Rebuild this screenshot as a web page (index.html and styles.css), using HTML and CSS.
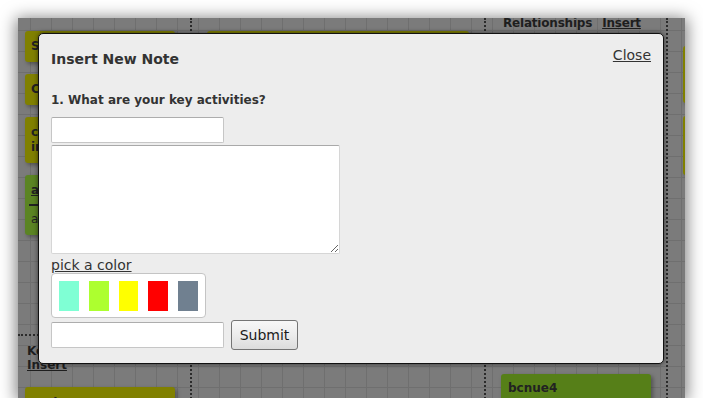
FILE: index.html
```html
<!DOCTYPE html>
<html lang="en">
<head>
  <meta charset="UTF-8">
  <meta name="viewport" content="width=device-width, initial-scale=1.0">
  <title>Canvas board</title>
  <link rel="stylesheet" href="styles.css">
</head>

<body>
  <div class="frame">
    <div class="board">
      <section class="col col-a">
        <div class="area area-top">
          <div class="note">Suppliers</div>
          <div class="note">Chiefs</div>
          <div class="note">coffee<br>importers</div>
          <div class="note note-green">
            <span class="note-title">advisors</span>
            <hr>
            <span class="note-body">accountant</span>
          </div>
        </div>
        <div class="area area-bottom">
          <h4>Key Resources</h4>
          <a href="#!" class="insert">Insert</a>
          <div class="note note-low">cash</div>
        </div>
      </section>

      <section class="col col-b">
        <div class="note note-wide">Great coffee at a fair price</div>
      </section>

      <section class="col col-c">
        <h4 class="col-head">Relationships <a href="#!" class="insert">Insert</a></h4>
        <div class="note note-green note-late">bcnue4</div>
      </section>

      <section class="col col-d">
        <div class="note note-tall">students</div>
        <div class="note note-taller">workers</div>
      </section>
    </div>

    <div class="modal">
      <div class="modal-head">
        <h3>Insert New Note</h3>
        <a href="#!" class="close">Close</a>
      </div>
      <form class="note-form" onsubmit="event.preventDefault()">
        <label for="title">1. What are your key activities?</label>
        <input type="text" id="title" name="title" class="field">
        <textarea name="body" class="body-field"></textarea>
        <a href="#!" class="pick">pick a color</a>
        <div class="swatches">
          <span class="swatch" style="background: #7fffd4"></span>
          <span class="swatch" style="background: #adff2f"></span>
          <span class="swatch" style="background: #ffff00"></span>
          <span class="swatch" style="background: #ff0000"></span>
          <span class="swatch" style="background: #708090"></span>
        </div>
        <div class="actions">
          <input type="text" name="color" class="field">
          <button type="submit">Submit</button>
        </div>
      </form>
    </div>
  </div>
</body>
</html>
```

FILE: styles.css
```css
* {
  box-sizing: border-box;
}

body {
  margin: 0;
  background: #fff;
  font-family: "DejaVu Sans", sans-serif;
}

a {
  color: inherit;
}

.frame {
  position: relative;
  width: 667px;
  height: 380px;
  margin: 18px 0 0 18px;
  overflow: hidden;
  background-color: #7b7b7b;
  background-image:
    linear-gradient(90deg, #6f6f6f 1px, transparent 1px),
    linear-gradient(#6f6f6f 1px, transparent 1px);
  background-size: 21px 21px;
  background-position: 12px 12px;
  box-shadow: 0 2px 15px 2px rgba(0, 0, 0, .5);
}

/* board */
.board {
  display: grid;
  grid-template-columns: 172px 294px 182px 1fr;
  height: 100%;
  color: #1e1e1e;
}

.col {
  display: flex;
  flex-direction: column;
  border-left: 2px dotted #2b2b2b;
  padding-left: 15px;
}

.col-a {
  border-left: none;
  padding-left: 0;
}

.area-top {
  display: flex;
  flex-direction: column;
  gap: 12px;
  height: 318px;
  padding: 13px 0 0 7px;
  border-bottom: 2px dotted #2b2b2b;
}

.area-bottom {
  padding: 8px 0 0 9px;
}

h4 {
  margin: 0;
  font-size: 12px;
  line-height: 14px;
}

.insert {
  display: block;
  font-size: 12px;
  font-weight: bold;
  line-height: 14px;
}

.col-head {
  margin-top: -2px;
  padding-left: 2px;
  letter-spacing: -0.2px;
}

.col-head .insert {
  display: inline;
  margin-left: 6px;
}

.note {
  width: 150px;
  padding: 8px 6px;
  background: #808000;
  border-radius: 3px;
  box-shadow: 2px 2px 4px rgba(0, 0, 0, .35);
  font-size: 12px;
  font-weight: bold;
  line-height: 15px;
  color: #222;
}

.note-green {
  background: #5b8423;
}

.note-green hr {
  margin: 6px 0 6px -2px;
  border: none;
  border-top: 2px solid #222;
}

.note-title {
  text-decoration: underline;
}

.note-body {
  font-weight: normal;
}

.note-low {
  margin: 15px 0 0 -2px;
  padding-top: 9px;
}

.note-wide {
  width: 262px;
  height: 80px;
  margin-top: 13px;
}

.note-late {
  margin-top: 344px;
  padding: 7px 7px;
  background: #567f18;
  height: 60px;
}

.note-tall {
  height: 57px;
  margin-top: 28px;
}

.note-taller {
  height: 59px;
  margin-top: 13px;
}

/* modal */
.modal {
  position: absolute;
  left: 20px;
  top: 15px;
  width: 626px;
  height: 331px;
  padding: 13px 12px 0;
  background: #ededed;
  border: 1px solid #111;
  border-radius: 5px;
  box-shadow: 0 0 5px rgba(0, 0, 0, .55);
  color: #333;
}

.modal-head {
  display: flex;
  justify-content: space-between;
  align-items: flex-start;
}

.modal-head h3 {
  margin: 4px 0 0;
  font-size: 14px;
  line-height: 17px;
}

.close {
  font-size: 14px;
  line-height: 17px;
}

.note-form {
  display: flex;
  flex-direction: column;
  align-items: flex-start;
}

.note-form label {
  margin-top: 25px;
  font-size: 12px;
  font-weight: bold;
  line-height: 15px;
}

.field {
  width: 173px;
  height: 26px;
  margin: 0;
  background: #fff;
  border: 1px solid #c6c6c6;
  border-top-color: #adadad;
  border-radius: 2px;
  outline: none;
}

.note-form > .field {
  margin-top: 9px;
}

.body-field {
  width: 289px;
  height: 109px;
  margin: 2px 0 0;
  background: #fff;
  border: 1px solid #d6d6d6;
  border-top-color: #a9a9a9;
  border-radius: 2px;
  outline: none;
}

.pick {
  margin-top: 3px;
  font-size: 14px;
  line-height: 17px;
}

.swatches {
  display: flex;
  gap: 10px;
  width: 155px;
  height: 45px;
  margin-top: -1px;
  padding: 7px;
  background: #fff;
  border: 1px solid #c4c4c4;
  border-radius: 4px;
}

.swatch {
  width: 20px;
  height: 30px;
}

.actions {
  display: flex;
  align-items: center;
  gap: 7px;
  margin-top: 2px;
}

button {
  width: 67px;
  height: 30px;
  padding: 0;
  background: linear-gradient(#f7f7f7, #ececec 50%, #dcdcdc);
  border: 1px solid #747474;
  border-radius: 3px;
  font-family: "DejaVu Sans", sans-serif;
  font-size: 14px;
  color: #1a1a1a;
  cursor: pointer;
}
```
